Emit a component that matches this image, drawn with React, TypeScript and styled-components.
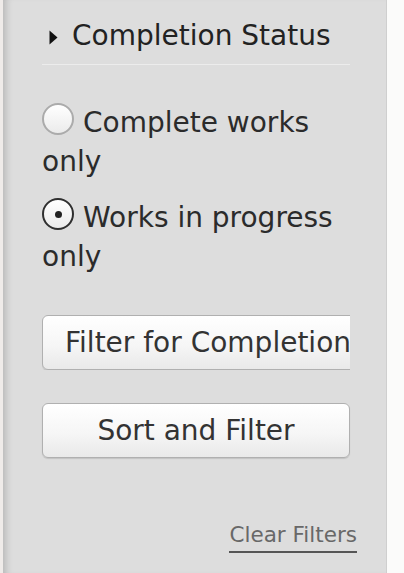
import React, { FC, useState } from 'react'
import styled, { createGlobalStyle } from 'styled-components'

const GlobalStyle = createGlobalStyle`
  html, body {
    margin: 0;
    padding: 0;
    background: #fbfbfa;
  }
  body {
    font-family: "DejaVu Sans", "Liberation Sans", sans-serif;
  }
`

const StyledPage = styled.div`
  display: flex;
  flex-direction: row;
  height: 573px;
  overflow: hidden;
`
const StyledEdge = styled.div`
  width: 3px;
  flex-shrink: 0;
  background: #efebe9;
`
const StyledPanel = styled.aside`
  width: 384px;
  flex-shrink: 0;
  display: flex;
  flex-direction: column;
  padding: 19px 0 0 39px;
  box-sizing: border-box;
  background: #dddddd;
  border-right: 1px solid #cfcfcf;
  box-shadow: inset 8px 0 7px -5px rgba(0, 0, 0, 0.17);
  color: #2b2b2b;
`
const StyledContent = styled.div`
  width: 316px;
  display: flex;
  flex-direction: column;
`
const StyledHeading = styled.div`
  display: flex;
  align-items: center;
  gap: 14px;
  padding: 0 0 11px 7px;
  font-size: 28px;
  line-height: 34px;
  color: #222;
  border-bottom: 1px solid #ececec;
  width: 308px;
  box-sizing: border-box;

  svg {
    flex-shrink: 0;
    margin-top: 2px;
  }
`
const StyledOptions = styled.div`
  display: flex;
  flex-direction: column;
  gap: 17px;
  padding-top: 38px;
`
const StyledLabel = styled.label`
  display: block;
  font-size: 28px;
  line-height: 39px;
  color: #2b2b2b;
  cursor: pointer;
`
const StyledRadio = styled.span<{ $checked: boolean }>`
  display: inline-block;
  position: relative;
  width: 32px;
  height: 32px;
  margin-right: 9px;
  vertical-align: -3px;
  border-radius: 50%;
  box-sizing: border-box;
  border: 2px solid ${(p) => (p.$checked ? '#2f2f2f' : '#ababab')};
  background: linear-gradient(#ffffff, #ebebeb);

  &::after {
    content: '';
    display: ${(p) => (p.$checked ? 'block' : 'none')};
    position: absolute;
    left: 50%;
    top: 50%;
    width: 7px;
    height: 7px;
    margin: -3.5px 0 0 -3.5px;
    border-radius: 50%;
    background: #222;
  }
`
const StyledButtons = styled.div`
  display: flex;
  flex-direction: column;
  gap: 33px;
  padding-top: 39px;
`
const StyledClip = styled.div`
  width: 308px;
  overflow: hidden;
`
const StyledButton = styled.button<{ $wide?: boolean }>`
  display: block;
  width: ${(p) => (p.$wide ? 'auto' : '308px')};
  height: 55px;
  padding: 0 22px;
  white-space: nowrap;
  font-family: "DejaVu Sans", "Liberation Sans", sans-serif;
  font-size: 28px;
  color: #333;
  border: 1.5px solid #b0b0b0;
  border-radius: 6px;
  background: linear-gradient(#ffffff 0%, #f6f6f6 55%, #e9e9e9 100%);
  box-shadow: 0 1px 1px rgba(0, 0, 0, 0.12);
  cursor: pointer;
`
const StyledFooter = styled.div`
  display: flex;
  justify-content: flex-end;
  padding-top: 63px;
`
const StyledClear = styled.a`
  font-size: 21.5px;
  line-height: 28px;
  color: #686868;
  text-decoration: none;
  border-bottom: 2px solid #555;
  padding-bottom: 2px;
  margin-right: 1px;
  cursor: pointer;
`

const Triangle: FC = () => (
  <svg width='9' height='15' viewBox='0 0 9 15'>
    <path d='M0.5 0.5 L8.5 7.5 L0.5 14.5 Z' fill='#111' />
  </svg>
)

const App: FC = () => {
  const [status, setStatus] = useState('progress')

  return (
    <StyledPage>
      <GlobalStyle />
      <StyledEdge />
      <StyledPanel>
        <StyledContent>
          <StyledHeading>
            <Triangle />
            <span>Completion Status</span>
          </StyledHeading>

          <StyledOptions>
            <StyledLabel onClick={() => setStatus('complete')}>
              <StyledRadio $checked={status === 'complete'} />
              Complete works only
            </StyledLabel>
            <StyledLabel onClick={() => setStatus('progress')}>
              <StyledRadio $checked={status === 'progress'} />
              Works in progress only
            </StyledLabel>
          </StyledOptions>

          <StyledButtons>
            <StyledClip>
              <StyledButton $wide>Filter for Completion</StyledButton>
            </StyledClip>
            <StyledButton>Sort and Filter</StyledButton>
          </StyledButtons>

          <StyledFooter>
            <StyledClear>Clear Filters</StyledClear>
          </StyledFooter>
        </StyledContent>
      </StyledPanel>
    </StyledPage>
  )
}

export default App
